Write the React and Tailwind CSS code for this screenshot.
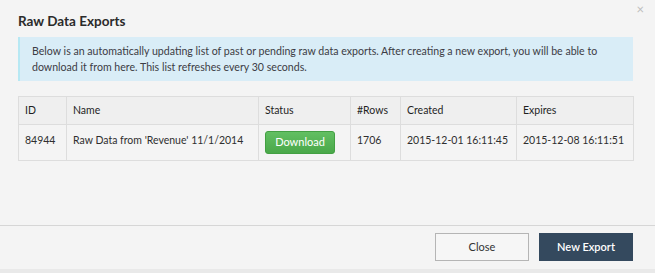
export default function App() {
  const font = { fontFamily: "Lato, 'Open Sans', sans-serif" };
  return (
    <div className="w-[655px] h-[273px] bg-[#e9e9e9] overflow-hidden" style={font}>
      <div className="h-[269px] bg-[#f4f4f4] flex flex-col relative">
        <button className="absolute right-[11px] top-[3px] text-[#bdbdbd] text-[13px] leading-none">×</button>
        <div className="pl-[18px] pr-[22px] pt-[12px]">
          <h1 className="text-[13.5px] font-bold text-[#2b2b2b] leading-[18px]">Raw Data Exports</h1>
          <div className="mt-[7px] h-[44px] bg-[#d9edf7] border-l-[2px] border-[#b7e8f3] pl-[12px] pr-[10px] pt-[6px] text-[10.6px] leading-[16px] text-[#3c3c44]">
            Below is an automatically updating list of past or pending raw data exports. After creating a new export, you will be able to download it from here. This list refreshes every 30 seconds.
          </div>
          <table className="mt-[15px] w-[615px] border-collapse text-[10.5px] text-[#2f2f2f] table-fixed whitespace-nowrap">
            <colgroup>
              <col className="w-[48px]" />
              <col className="w-[192px]" />
              <col className="w-[92px]" />
              <col className="w-[50px]" />
              <col className="w-[116px]" />
              <col className="w-[117px]" />
            </colgroup>
            <thead>
              <tr className="h-[28px] bg-[#efefef]">
                {["ID", "Name", "Status", "#Rows", "Created", "Expires"].map((h) => (
                  <th key={h} className="border border-[#dddddd] px-[6px] text-left font-normal text-[#1f1f1f]">{h}</th>
                ))}
              </tr>
            </thead>
            <tbody>
              <tr className="h-[36px]">
                <td className="border border-[#dddddd] px-[6px] align-top pt-[8px]">84944</td>
                <td className="border border-[#dddddd] px-[6px] align-top pt-[8px]">Raw Data from 'Revenue' 11/1/2014</td>
                <td className="border border-[#dddddd] px-[6px] align-top pt-[6px] pb-[5px]">
                  <span className="inline-flex items-center justify-center w-[70px] h-[23px] rounded-[3px] bg-gradient-to-b from-[#62bf62] to-[#4aa84a] border border-[#43a043] text-white text-[11px]">Download</span>
                </td>
                <td className="border border-[#dddddd] px-[6px] align-top pt-[8px]">1706</td>
                <td className="border border-[#dddddd] px-[6px] align-top pt-[8px]">2015-12-01 16:11:45</td>
                <td className="border border-[#dddddd] px-[6px] align-top pt-[8px]">2015-12-08 16:11:51</td>
              </tr>
            </tbody>
          </table>
        </div>
        <div className="mt-auto border-t border-[#d6d6d6] h-[44px] flex justify-end items-start pt-[7px] pr-[22px] gap-[10px]">
          <button className="w-[94px] h-[28px] border border-[#b5b5b5] bg-[#f6f6f6] text-[11px] text-[#333]">Close</button>
          <button className="w-[94px] h-[28px] bg-[#34495e] text-white text-[11px] font-semibold">New Export</button>
        </div>
      </div>
    </div>
  );
}
